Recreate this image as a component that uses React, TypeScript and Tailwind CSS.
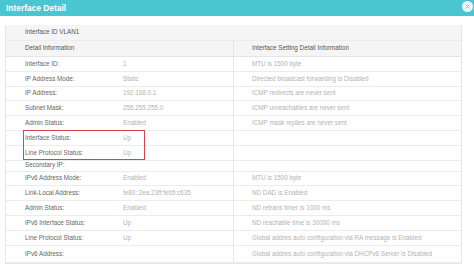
import React from "react";

type Row = { label: string; value: string; detail: string; h: string };

const rows: Row[] = [
  { label: "Interface ID:", value: "1", detail: "MTU is 1500 byte", h: "h-[14.8px]" },
  { label: "IP Address Mode:", value: "Static", detail: "Directed broadcast forwarding is Disabled", h: "h-[14.8px]" },
  { label: "IP Address:", value: "192.168.0.1", detail: "ICMP redirects are never sent", h: "h-[14.8px]" },
  { label: "Subnet Mask:", value: "255.255.255.0", detail: "ICMP unreachables are never sent", h: "h-[14.8px]" },
  { label: "Admin Status:", value: "Enabled", detail: "ICMP mask replies are never sent", h: "h-[14.8px]" },
  { label: "Interface Status:", value: "Up", detail: "", h: "h-[14.8px]" },
  { label: "Line Protocol Status:", value: "Up", detail: "", h: "h-[14.8px]" },
  { label: "Secondary IP:", value: "", detail: "", h: "h-[11px]" },
  { label: "IPv6 Address Mode:", value: "Enabled", detail: "MTU is 1500 byte", h: "h-[14.8px]" },
  { label: "Link-Local Address:", value: "fe80::2ea:23ff:feb5:c635", detail: "ND DAD is Enabled", h: "h-[14.8px]" },
  { label: "Admin Status:", value: "Enabled", detail: "ND retrans timer is 1000 ms", h: "h-[14.8px]" },
  { label: "IPv6 Interface Status:", value: "Up", detail: "ND reachable time is 30000 ms", h: "h-[14.8px]" },
  { label: "Line Protocol Status:", value: "Up", detail: "Global addres auto configuration via RA message is Enabled", h: "h-[15.5px]" },
  { label: "IPv6 Address:", value: "", detail: "Global addres auto configuration via DHCPv6 Server is Disabled", h: "h-[16.5px]" },
];

export default function App() {
  return (
    <div className="w-[474px] h-[269px] bg-white overflow-hidden text-[6.3px] leading-none" style={{ fontFamily: '"Liberation Sans", Arial, sans-serif' }}>
      {/* Dialog title bar */}
      <div className="relative h-[16px] bg-[#4ac6d1] flex items-center pl-[6px]">
        <span className="text-white font-bold text-[8.4px]">Interface Detail</span>
        <div className="absolute left-[462px] top-[1px] w-[11px] h-[11px] rounded-full bg-[#eef9fa] flex items-center justify-center">
          <svg width="5" height="5" viewBox="0 0 10 10">
            <path d="M1 1L9 9M9 1L1 9" stroke="#7ccfd6" strokeWidth="2" />
          </svg>
        </div>
      </div>

      {/* Detail table */}
      <div className="relative ml-[5px] mt-[9px] w-[457px] border-x border-b border-[#e6e6e6]">
        <div className="h-[16px] bg-[#f5f5f5] flex items-center pl-[19px] text-[#555] border-b border-[#ececec]">
          Interface ID VLAN1
        </div>
        <div className="h-[16px] bg-[#f5f5f5] flex border-b border-[#e4e4e4] text-[#555]">
          <div className="w-[228px] flex items-center pl-[19px] border-r border-[#e4e4e4]">Detail Information</div>
          <div className="flex-1 flex items-center pl-[18px]">Interface Setting Detail Information</div>
        </div>
        {rows.map((r, i) => (
          <div key={i} className={`${r.h} flex border-b border-[#ececec] last:border-b-0`}>
            <div className="w-[228px] flex items-center pl-[19px] border-r border-[#e8e8e8]">
              <span className="w-[98px] text-[#666]">{r.label}</span>
              <span className="text-[#b3b3b3]">{r.value}</span>
            </div>
            <div className="flex-1 flex items-center pl-[18px] text-[#b3b3b3]">{r.detail}</div>
          </div>
        ))}

        {/* highlight box */}
        <div className="absolute left-[17px] top-[105px] w-[122px] h-[30px] border border-[#d9434e]" />
      </div>
    </div>
  );
}
